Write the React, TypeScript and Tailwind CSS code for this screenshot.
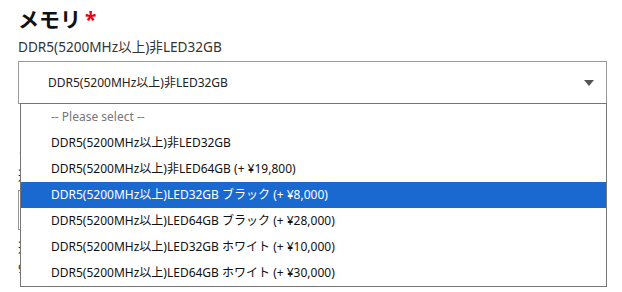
import React from "react";

const font = { fontFamily: '"Noto Sans", "Noto Sans CJK JP", sans-serif' };

const options = [
  { label: "-- Please select --", muted: true },
  { label: "DDR5(5200MHz以上)非LED32GB" },
  { label: "DDR5(5200MHz以上)非LED64GB (+ ¥19,800)" },
  { label: "DDR5(5200MHz以上)LED32GB ブラック (+ ¥8,000)", active: true },
  { label: "DDR5(5200MHz以上)LED64GB ブラック (+ ¥28,000)" },
  { label: "DDR5(5200MHz以上)LED32GB ホワイト (+ ¥10,000)" },
  { label: "DDR5(5200MHz以上)LED64GB ホワイト (+ ¥30,000)" },
];

export default function App() {
  return (
    <div className="w-[622px] h-[292px] overflow-hidden bg-white" style={font}>
      <div className="relative pl-[18px] pr-[15px] pt-[3px]">
        <h2 className="flex items-center text-[21px] font-bold leading-[32px] text-[#111]">
          メモリ
          <span className="ml-[4px] text-[#e60012]">*</span>
        </h2>
        <p className="mt-[2px] text-[13.6px] leading-[20px] text-[#333]">DDR5(5200MHz以上)非LED32GB</p>
        <div className="mt-[4px] flex h-[43px] items-center justify-between border border-[#999] pl-[29px] pr-[12px]">
          <span className="text-[12px] text-[#222]">DDR5(5200MHz以上)非LED32GB</span>
          <svg width="10" height="6" viewBox="0 0 10 6">
            <path d="M0 0h10L5 6z" fill="#555" />
          </svg>
        </div>

        {/* content behind the open list */}
        <div className="mt-[28px] text-[20px] font-bold text-[#111]">ストレージ</div>
        <div className="mt-[4px] text-[13px] text-[#333]">選択</div>
        <div className="mt-[4px] h-[40px] border border-[#999]" />
        <div className="mt-[8px] text-[13px] text-[#333]">選択</div>
        <div className="mt-[2px] text-[13px] text-[#333]">9</div>

        <ul className="absolute left-[20px] top-[103px] w-[587px] border border-[#767676] bg-white text-[12px]">
          {options.map((o) => (
            <li
              key={o.label}
              className={
                "h-[26px] pl-[30px] leading-[26px] " +
                (o.active ? "bg-[#1a69d1] text-white" : o.muted ? "text-[#777]" : "text-[#111]")
              }
            >
              {o.label}
            </li>
          ))}
        </ul>
      </div>
    </div>
  );
}
